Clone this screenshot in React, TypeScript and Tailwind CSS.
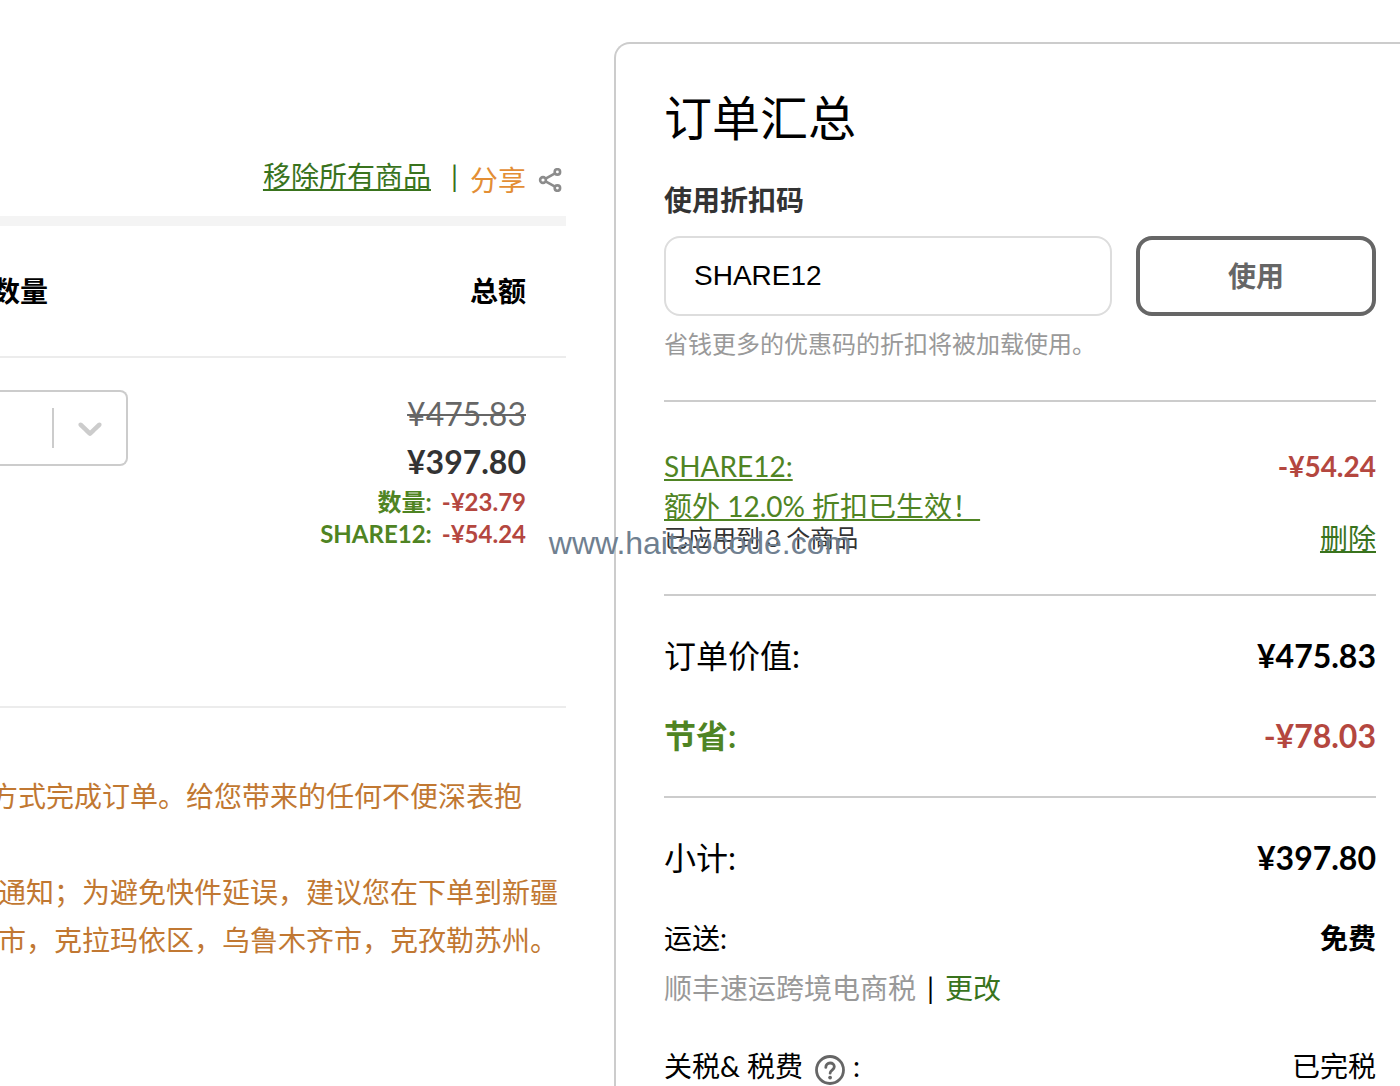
import { ReactNode, useState } from "react";

const Divider = () => <hr className="border-t-2 border-[#cccccc]" />;

const ShareIcon = () => (
	<svg
		viewBox="0 0 24 24"
		className="w-6 h-6 text-[#8c8c8c]"
		fill="none"
		stroke="currentColor"
		strokeWidth="2.6"
		aria-hidden="true"
	>
		<circle cx="5" cy="12" r="2.9" />
		<circle cx="19.4" cy="3.9" r="2.7" />
		<circle cx="19.4" cy="20.1" r="2.7" />
		<path d="M7.6 10.6 17 5.3M7.6 13.4l9.4 5.3" />
	</svg>
);

const ChevronIcon = () => (
	<svg viewBox="0 0 20 20" className="w-10 h-10 fill-[#cccccc]" aria-hidden="true">
		<path d="M4.516 7.548c0.436-0.446 1.043-0.481 1.576 0l3.908 3.747 3.908-3.747c0.533-0.481 1.141-0.446 1.574 0 0.436 0.445 0.408 1.197 0 1.615-0.406 0.418-4.695 4.502-4.695 4.502-0.217 0.223-0.502 0.335-0.787 0.335s-0.57-0.112-0.789-0.335c0 0-4.287-4.084-4.695-4.502s-0.436-1.17 0-1.615z" />
	</svg>
);

const HelpIcon = () => (
	<svg
		viewBox="0 0 30 30"
		className="w-[30px] h-[30px] text-[#666666]"
		fill="none"
		stroke="currentColor"
		strokeWidth="2.8"
		aria-hidden="true"
	>
		<circle cx="15" cy="15" r="13.5" />
		<path
			d="M10.8 12.4c0-2.8 1.8-4.4 4.3-4.4s4.2 1.6 4.2 3.8c0 3.2-4.2 3.4-4.2 6.4"
			strokeLinecap="round"
		/>
		<circle cx="15.1" cy="22.6" r="1.9" fill="currentColor" stroke="none" />
	</svg>
);

const Row = ({ label, value }: { label: ReactNode; value: ReactNode }) => (
	<div className="flex justify-between items-center leading-[48px]">
		<div>{label}</div>
		<div className="font-bold">{value}</div>
	</div>
);

const Cart = () => (
	<section className="overflow-hidden">
		<div className="flex justify-end items-start h-[216px] pt-[156px] pr-1 text-[28px] leading-10">
			<a href="#remove" className="underline text-[#39731d]">
				移除所有商品
			</a>
			<span className="pl-5 pr-3 text-[#39731d]">|</span>
			<button type="button" className="flex items-center gap-3 pt-1 text-[#e38e34]">
				分享
				<ShareIcon />
			</button>
		</div>
		<div className="h-2.5 bg-[#f4f4f4]"></div>
		<div className="flex justify-between items-center h-[130px] -ml-2 pr-10 text-[28px] font-bold">
			<span>数量</span>
			<span>总额</span>
		</div>
		<div className="flex justify-between items-start h-[352px] pt-8 pr-10 border-y-2 border-[#ececec]">
			<div className="relative w-32">
				<select
					aria-label="数量"
					className="block appearance-none w-full h-[76px] bg-white border-2 border-l-0 border-[#cccccc] rounded-r-lg"
				></select>
				<div className="absolute inset-y-0 right-[18px] flex items-center gap-4 pointer-events-none">
					<span className="w-0.5 h-10 bg-[#cccccc]"></span>
					<ChevronIcon />
				</div>
			</div>
			<div className="text-right">
				<div className="text-[32px] leading-[48px] line-through decoration-2 text-[#666666]">
					¥475.83
				</div>
				<div className="text-[32px] leading-[48px] font-bold text-[#333333]">
					¥397.80
				</div>
				<dl className="grid grid-cols-[auto_auto] gap-x-2.5 text-2xl leading-8 font-bold">
					<dt className="text-[#4f8423]">数量:</dt>
					<dd className="text-[#b4473f]">-¥23.79</dd>
					<dt className="text-[#4f8423]">SHARE12:</dt>
					<dd className="text-[#b4473f]">-¥54.24</dd>
				</dl>
			</div>
		</div>
		<div className="pt-16 text-[28px] leading-[48px] whitespace-nowrap text-[#c17832]">
			<div className="flex justify-end pr-11">
				<p>方式完成订单。给您带来的任何不便深表抱</p>
			</div>
			<div className="flex justify-end pt-12 pr-2">
				<p>
					通知；为避免快件延误，建议您在下单到新疆
					<br />
					市，克拉玛依区，乌鲁木齐市，克孜勒苏州。
				</p>
			</div>
		</div>
	</section>
);

const Summary = () => {
	const [code, setCode] = useState<string>("SHARE12");

	return (
		<section className="mt-[42px] pt-10 pl-12 pr-6 border-2 border-r-0 border-b-0 border-[#cccccc] rounded-tl-2xl">
			<h2 className="text-5xl leading-[68px]">订单汇总</h2>
			<form onSubmit={e => e.preventDefault()}>
				<label
					htmlFor="discount-code"
					className="block pt-7 pb-4 text-[28px] leading-10 font-bold text-[#333333]"
				>
					使用折扣码
				</label>
				<div className="flex gap-6">
					<input
						type="text"
						id="discount-code"
						value={code}
						onChange={e => setCode(e.target.value)}
						className="flex-1 min-w-0 h-20 px-7 border-2 border-[#dddddd] rounded-2xl font-['Liberation_Sans',sans-serif] text-[28px]"
					/>
					<button
						type="submit"
						className="w-60 h-20 border-4 border-[#666666] rounded-2xl text-[28px] font-bold text-[#666666]"
					>
						使用
					</button>
				</div>
			</form>
			<p className="pt-3 pb-10 text-2xl leading-8 text-[#999999]">
				省钱更多的优惠码的折扣将被加载使用。
			</p>
			<Divider />
			<div className="flex justify-between pt-11 pb-9 text-[28px] leading-10">
				<div className="pb-2">
					<a href="#code" className="block underline whitespace-pre text-[#4f8423]">
						SHARE12:
						<br />
						{"额外 12.0% 折扣已生效！"}
					</a>
					<p className="text-2xl leading-6 text-[#333333]">已应用到 3 个商品</p>
				</div>
				<div className="flex flex-col justify-between items-end">
					<span className="font-bold text-[#b4473f]">-¥54.24</span>
					<button type="button" className="underline text-[#39731d]">
						删除
					</button>
				</div>
			</div>
			<Divider />
			<div className="flex flex-col gap-8 py-9 text-[32px]">
				<Row label="订单价值:" value="¥475.83" />
				<Row
					label={<span className="font-bold text-[#4f8423]">节省:</span>}
					value={<span className="text-[#b4473f]">-¥78.03</span>}
				/>
			</div>
			<Divider />
			<div className="pt-9 text-[32px]">
				<Row label="小计:" value="¥397.80" />
			</div>
			<div className="pt-8 text-[28px]">
				<Row label="运送:" value="免费" />
				<div className="flex gap-[11px] leading-[52px]">
					<span className="text-[#999999]">顺丰速运跨境电商税</span>
					<span>|</span>
					<a href="#shipping" className="text-[#39731d]">
						更改
					</a>
				</div>
			</div>
			<div className="flex justify-between pt-7 text-[28px] leading-[48px]">
				<div className="flex items-center">
					关税&amp; 税费
					<button type="button" aria-label="关税说明" className="pl-3 pr-2 pt-2">
						<HelpIcon />
					</button>
					:
				</div>
				<span>已完税</span>
			</div>
		</section>
	);
};

const App = () => (
	<main className="relative grid grid-cols-[minmax(0,566fr)_minmax(0,786fr)] gap-12 h-screen overflow-hidden bg-white text-black font-['Lato','Noto_Sans_CJK_SC',sans-serif]">
		<Cart />
		<Summary />
		<div className="absolute inset-0 flex items-center justify-center pointer-events-none font-['Liberation_Sans',sans-serif] text-[32px] text-[#708090]">
			www.haitaocode.com
		</div>
	</main>
);

export default App;
